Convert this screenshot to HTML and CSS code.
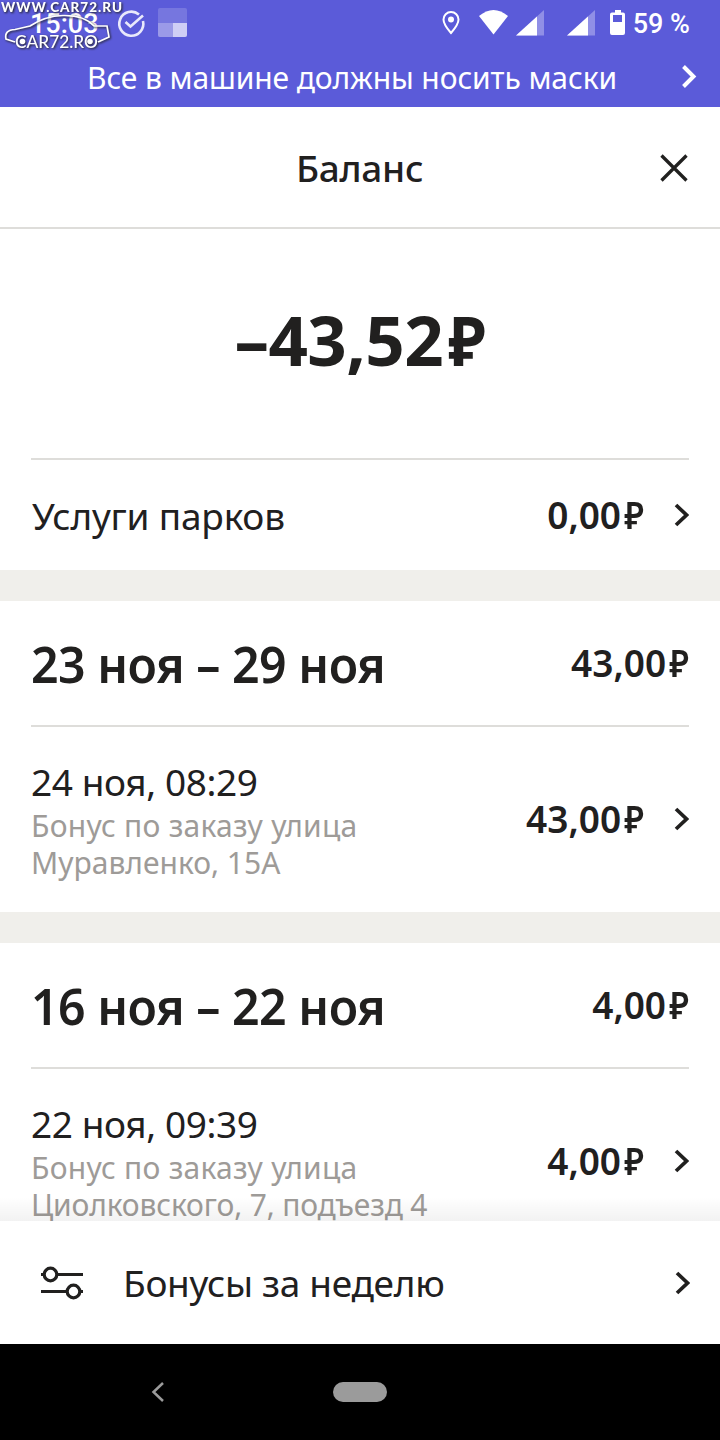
FILE: index.html
```html
<!DOCTYPE html>
<html lang="ru">
<head>
<meta charset="utf-8">
<title>Баланс</title>
<link rel="stylesheet" href="styles.css">
</head>
<body>
<div class="screen">
  <div class="top">
    <div class="status">
      <span class="clock">15:03</span>
      <svg class="status-icons" width="720" height="48" viewBox="0 0 720 48">
        <path d="M139 14.500A12 12 0 1 0 143 21" fill="none" stroke="#e9e9fb" stroke-width="2.600"/>
        <path d="M125.500 22l5 4.500 12.500-11" fill="none" stroke="#e9e9fb" stroke-width="2.600"/>
        <rect x="158" y="8" width="29" height="29" rx="2" fill="#7676df"/>
        <path d="M158 23h15v14h-13q-2 0-2-2z" fill="#9b9ae8"/>
        <path d="M173 23h14v12q0 2-2 2h-12z" fill="#cfcef5"/>
        <path d="M451 12a7.500 7.500 0 0 0-7.500 7.500c0 5 7.500 13.500 7.500 13.500s7.500-8.500 7.500-13.500A7.500 7.500 0 0 0 451 12z" fill="none" stroke="#fff" stroke-width="2"/>
        <circle cx="451" cy="19.500" r="3" fill="#fff"/>
        <path d="M479 16q14.500-12 29 0L493.500 34.500z" fill="#fff"/>
        <path d="M544 10v25.500h-28z" fill="#908fe6"/><path d="M537 16.500v19h-21z" fill="#fff"/>
        <path d="M595 10v25.500h-28z" fill="#908fe6"/><path d="M588 16.500v19h-21z" fill="#fff"/>
        <path d="M615 10h6v2.500h2q2 0 2 2V33q0 2-2 2h-11q-2 0-2-2V14.500q0-2 2-2h3z" fill="#fff"/>
        <rect x="613" y="15" width="9" height="7" fill="#5b5bd9"/>
      </svg>
      <span class="battery">59 %</span>
    </div>
    <div class="banner">
      <span class="banner-text">Все в машине должны носить маски</span>
      <svg class="banner-arrow" width="16" height="26" viewBox="0 0 16 26"><path d="M2.500 2.500l10 10-10 10" fill="none" stroke="#fff" stroke-width="4"/></svg>
    </div>
    <svg class="watermark" width="130" height="52" viewBox="0 0 130 52">
      <g fill="none" stroke="#fff" stroke-width="1.700">
        <path d="M15 42L6 39Q4 30 15 29.500L30 26Q45 16 63 15.500Q84 15 94 26L107 26L109 37L98 42"/>
      </g>
      <circle cx="22.500" cy="41.500" r="2.800" fill="#fff"/><circle cx="90" cy="41.500" r="2.800" fill="#fff"/>
      <text class="wm-top" x="1" y="12" textLength="121" lengthAdjust="spacing">WWW.CAR72.RU</text>
      <text class="wm-logo" x="15" y="48" textLength="83" lengthAdjust="spacingAndGlyphs">CAR72.RO</text>
    </svg>
  </div>
  <header class="header">
    <h1 class="title">Баланс</h1>
    <svg class="close" width="30" height="30" viewBox="0 0 30 30"><path d="M2.500 2.500l25 25M27.500 2.500l-25 25" fill="none" stroke="#21201f" stroke-width="3.300"/></svg>
  </header>
  <main class="content">
    <div class="total">–43,52<span class="rub">₽</span></div>
    <div class="row parks">
      <span class="label">Услуги парков</span>
      <span class="money">0,00<span class="rub">₽</span></span>
      <svg class="arrow" width="16" height="26" viewBox="0 0 16 26"><path d="M3 3l10.500 10-10.500 10" fill="none" stroke="#21201f" stroke-width="3.700"/></svg>
    </div>
    <div class="gap"></div>
    <section class="week">
      <div class="row week-head"><h2 class="range">23 ноя – 29 ноя</h2><span class="money">43,00<span class="rub">₽</span></span></div>
      <div class="row item">
        <div class="details">
          <div class="time">24 ноя, 08:29</div>
          <div class="note"><span class="note-a">Бонус по заказу улица</span><br><span class="note-b">Муравленко, 15А</span></div>
        </div>
        <span class="money">43,00<span class="rub">₽</span></span>
        <svg class="arrow" width="16" height="26" viewBox="0 0 16 26"><path d="M3 2l10.500 10-10.500 10" fill="none" stroke="#21201f" stroke-width="3.700"/></svg>
      </div>
    </section>
    <div class="gap"></div>
    <section class="week">
      <div class="row week-head"><h2 class="range">16 ноя – 22 ноя</h2><span class="money">4,00<span class="rub">₽</span></span></div>
      <div class="row item">
        <div class="details">
          <div class="time">22 ноя, 09:39</div>
          <div class="note"><span class="note-a">Бонус по заказу улица</span><br><span class="note-c">Циолковского, 7, подъезд 4</span></div>
        </div>
        <span class="money">4,00<span class="rub">₽</span></span>
        <svg class="arrow" width="16" height="26" viewBox="0 0 16 26"><path d="M3 2l10.500 10-10.500 10" fill="none" stroke="#21201f" stroke-width="3.700"/></svg>
      </div>
    </section>
    <div class="fade"></div>
  </main>
  <footer class="footer">
    <svg class="sliders" width="44" height="36" viewBox="0 0 44 36" fill="none" stroke="#21201f" stroke-width="3.200"><path d="M1 9.500h3M17 9.500h26M1 26.500h26M40 26.500h3"/><circle cx="10.500" cy="9.500" r="6.300"/><circle cx="33.500" cy="26.500" r="6.300"/></svg>
    <span class="footer-label">Бонусы за неделю</span>
    <svg class="arrow" width="16" height="26" viewBox="0 0 16 26"><path d="M3 3l10.500 10-10.500 10" fill="none" stroke="#21201f" stroke-width="3.700"/></svg>
  </footer>
  <nav class="nav">
    <svg class="back" width="14" height="20" viewBox="0 0 14 20"><path d="M12 1L2.500 10l9.500 9" fill="none" stroke="#9b9b9b" stroke-width="2.500"/></svg>
    <span class="home"></span>
  </nav>
</div>
</body>
</html>
```
FILE: styles.css
```css
* { box-sizing: border-box; }
body { margin: 0; }
.screen {
  width: 720px; height: 1440px; overflow: hidden;
  display: flex; flex-direction: column;
  background: #fff; color: #21201f;
  font-family: "Noto Sans", sans-serif; font-size: 37px;
  white-space: nowrap;
}
svg { display: block; flex: none; }
h1, h2 { margin: 0; }

.top { position: relative; height: 107px; background: #5b5bd9; color: #fff; }
.status { position: relative; display: flex; justify-content: space-between; height: 48px; padding: 0 30px; font: 500 27px/49px Roboto, sans-serif; }
.status-icons { position: absolute; left: 0; top: 0; }
.banner { display: flex; align-items: center; justify-content: space-between; height: 59px; padding: 0 23px 2px 87px; }
.banner-text { padding-top: 2px; font-size: 30px; line-height: 55px; letter-spacing: -.1px; }
.watermark { position: absolute; left: 0; top: 0; filter: drop-shadow(1px 1px 1px #222); }
.wm-top { font: 900 13.500px Lato, sans-serif; fill: #fff; }
.wm-logo { font: 500 17px Lato, sans-serif; fill: #fff; }

.header { display: flex; align-items: center; justify-content: flex-end; height: 122px; padding: 1px 31px 0; border-bottom: 2px solid #deddda; }
.title { flex: 1; padding-left: 265px; font-size: 37px; font-weight: 550; line-height: 119px; letter-spacing: -.3px; }

.content { position: relative; height: 992px; overflow: hidden; }
.total { height: 231px; margin: 0 31px; border-bottom: 2px solid #deddda; text-align: center; font-size: 69px; font-weight: 700; line-height: 220px; letter-spacing: -.6px; }
.row { display: flex; align-items: center; margin: 0 31px; }
.parks { height: 110px; }
.label { flex: 1; padding-left: 1px; letter-spacing: -.2px; }
.money { padding-bottom: 2px; font-weight: 600; }
.rub { display: inline-block; margin-left: 1px; letter-spacing: 0; transform: scaleX(.9); transform-origin: right; }
.arrow { margin-left: 29px; }
.gap { height: 31px; background: #f0efeb; }
.week-head { justify-content: space-between; height: 126px; border-bottom: 2px solid #deddda; }
.range { width: 350px; font-size: 51px; font-weight: 580; letter-spacing: -.500px; transform: scaleX(.945); transform-origin: left; }
.item { height: 185px; }
.details { flex: 1; padding-bottom: 2px; }
.time { line-height: 50px; letter-spacing: -.4px; }
.note { color: #9e9b98; font-size: 30px; line-height: 37px; }
.note-a { letter-spacing: .25px; }
.note-c { letter-spacing: -.15px; }
.fade { position: absolute; left: 0; right: 0; bottom: 0; height: 24px; background: linear-gradient(rgba(0,0,0,0), rgba(0,0,0,.05)); }

.footer { display: flex; align-items: center; height: 123px; padding: 0 30px 0 40px; }
.footer-label { flex: 1; padding-left: 39px; letter-spacing: -.3px; }
.nav { display: flex; align-items: center; height: 96px; padding-left: 151px; background: #000; }
.home { width: 54px; height: 20px; margin-left: 168px; border-radius: 10px; background: #9b9b9b; }
```
